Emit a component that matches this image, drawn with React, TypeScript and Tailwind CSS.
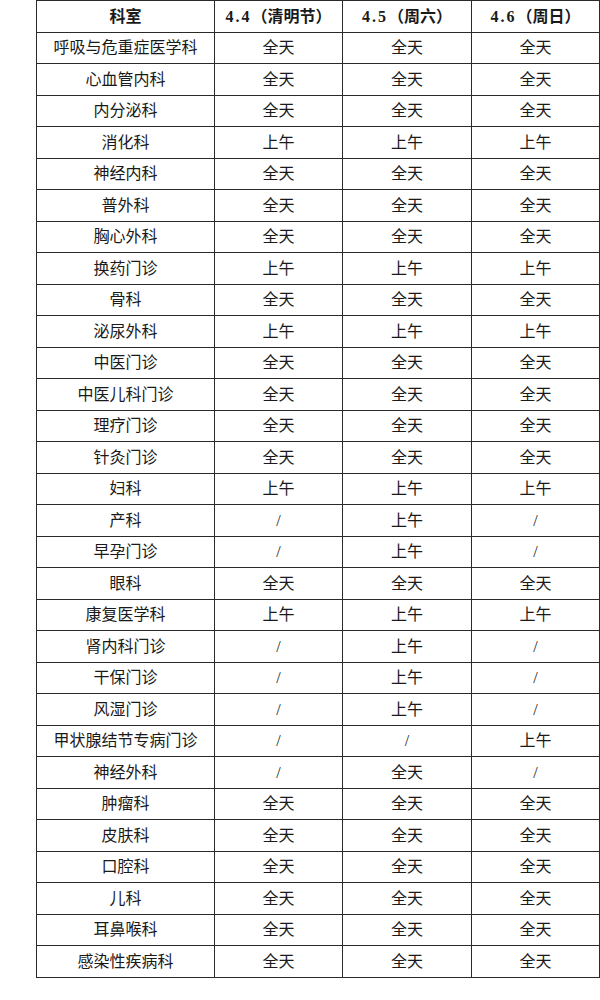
import React from "react";

type Row = [string, string, string, string];

const Q = "全天";
const S = "上午";
const N = "/";

const rows: Row[] = [
  ["呼吸与危重症医学科", Q, Q, Q],
  ["心血管内科", Q, Q, Q],
  ["内分泌科", Q, Q, Q],
  ["消化科", S, S, S],
  ["神经内科", Q, Q, Q],
  ["普外科", Q, Q, Q],
  ["胸心外科", Q, Q, Q],
  ["换药门诊", S, S, S],
  ["骨科", Q, Q, Q],
  ["泌尿外科", S, S, S],
  ["中医门诊", Q, Q, Q],
  ["中医儿科门诊", Q, Q, Q],
  ["理疗门诊", Q, Q, Q],
  ["针灸门诊", Q, Q, Q],
  ["妇科", S, S, S],
  ["产科", N, S, N],
  ["早孕门诊", N, S, N],
  ["眼科", Q, Q, Q],
  ["康复医学科", S, S, S],
  ["肾内科门诊", N, S, N],
  ["干保门诊", N, S, N],
  ["风湿门诊", N, S, N],
  ["甲状腺结节专病门诊", N, N, S],
  ["神经外科", N, Q, N],
  ["肿瘤科", Q, Q, Q],
  ["皮肤科", Q, Q, Q],
  ["口腔科", Q, Q, Q],
  ["儿科", Q, Q, Q],
  ["耳鼻喉科", Q, Q, Q],
  ["感染性疾病科", Q, Q, Q],
];

const font = {
  fontFamily: '"Liberation Serif", "Noto Sans CJK SC", serif',
};

function Cell({
  children,
  tall,
  bold,
}: {
  children: React.ReactNode;
  tall: boolean;
  bold?: boolean;
}) {
  return (
    <div
      className={
        "flex items-center justify-center border-r border-b border-[#2a2a2a] text-[16px] leading-none text-[#1a1a1a] " +
        (tall ? "h-[32px] " : "h-[31px] ") +
        (bold ? "font-bold" : "font-normal")
      }
    >
      {children}
    </div>
  );
}

function HeadDate({ d, label }: { d: string; label: string }) {
  return (
    <span className="flex items-center">
      <span className="tracking-[2px] font-bold font-['Liberation_Serif',serif]">{d}</span>
      <span>（{label}）</span>
    </span>
  );
}

export default function App() {
  return (
    <div className="w-[600px] h-[1000px] bg-white pl-[36px]" style={font}>
      <div className="grid grid-cols-[178px_128px_129px_128px] w-[564px] border-l border-t border-[#2a2a2a]">
        <Cell tall bold>科室</Cell>
        <Cell tall bold>
          <HeadDate d="4.4" label="清明节" />
        </Cell>
        <Cell tall bold>
          <HeadDate d="4.5" label="周六" />
        </Cell>
        <Cell tall bold>
          <HeadDate d="4.6" label="周日" />
        </Cell>
        {rows.map((r, i) => {
          const tall = (i + 1) % 2 === 0;
          return (
            <React.Fragment key={i}>
              {r.map((c, j) => (
                <Cell key={j} tall={tall}>
                  {c}
                </Cell>
              ))}
            </React.Fragment>
          );
        })}
      </div>
    </div>
  );
}
